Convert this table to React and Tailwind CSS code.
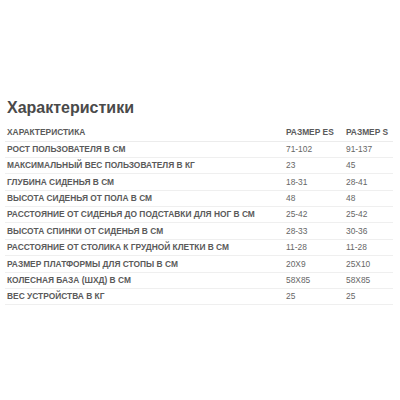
const rows = [
  ["РОСТ ПОЛЬЗОВАТЕЛЯ В СМ", "71-102", "91-137"],
  ["МАКСИМАЛЬНЫЙ ВЕС ПОЛЬЗОВАТЕЛЯ В КГ", "23", "45"],
  ["ГЛУБИНА СИДЕНЬЯ В СМ", "18-31", "28-41"],
  ["ВЫСОТА СИДЕНЬЯ ОТ ПОЛА В СМ", "48", "48"],
  ["РАССТОЯНИЕ ОТ СИДЕНЬЯ ДО ПОДСТАВКИ ДЛЯ НОГ В СМ", "25-42", "25-42"],
  ["ВЫСОТА СПИНКИ ОТ СИДЕНЬЯ В СМ", "28-33", "30-36"],
  ["РАССТОЯНИЕ ОТ СТОЛИКА К ГРУДНОЙ КЛЕТКИ В СМ", "11-28", "11-28"],
  ["РАЗМЕР ПЛАТФОРМЫ ДЛЯ СТОПЫ В СМ", "20X9", "25X10"],
  ["КОЛЕСНАЯ БАЗА (ШХД) В СМ", "58X85", "58X85"],
  ["ВЕС УСТРОЙСТВА В КГ", "25", "25"],
];

export default function App() {
  return (
    <div className="w-[400px] h-[400px] bg-white pt-[97px] px-[5px] text-[#5a5a5a]" style={{ fontFamily: "'Liberation Sans', Arial, sans-serif" }}>
      <h2 className="text-[16px] font-bold text-[#4a4a4a] pl-[2px] leading-[22px]">Характеристики</h2>
      <table className="w-[388px] mt-[5px] border-collapse text-[8.4px]">
        <thead>
          <tr className="h-[17px] border-b border-[#ececec]">
            <th className="text-left font-bold pl-[2px] uppercase">Характеристика</th>
            <th className="text-left font-bold w-[60px]">РАЗМЕР ES</th>
            <th className="text-left font-bold w-[47px]">РАЗМЕР S</th>
          </tr>
        </thead>
        <tbody>
          {rows.map((r) => (
            <tr key={r[0]} className="h-[16.4px] border-b border-[#efefef]">
              <td className="font-bold pl-[2px]">{r[0]}</td>
              <td className="text-[#666]">{r[1]}</td>
              <td className="text-[#666]">{r[2]}</td>
            </tr>
          ))}
        </tbody>
      </table>
    </div>
  );
}
